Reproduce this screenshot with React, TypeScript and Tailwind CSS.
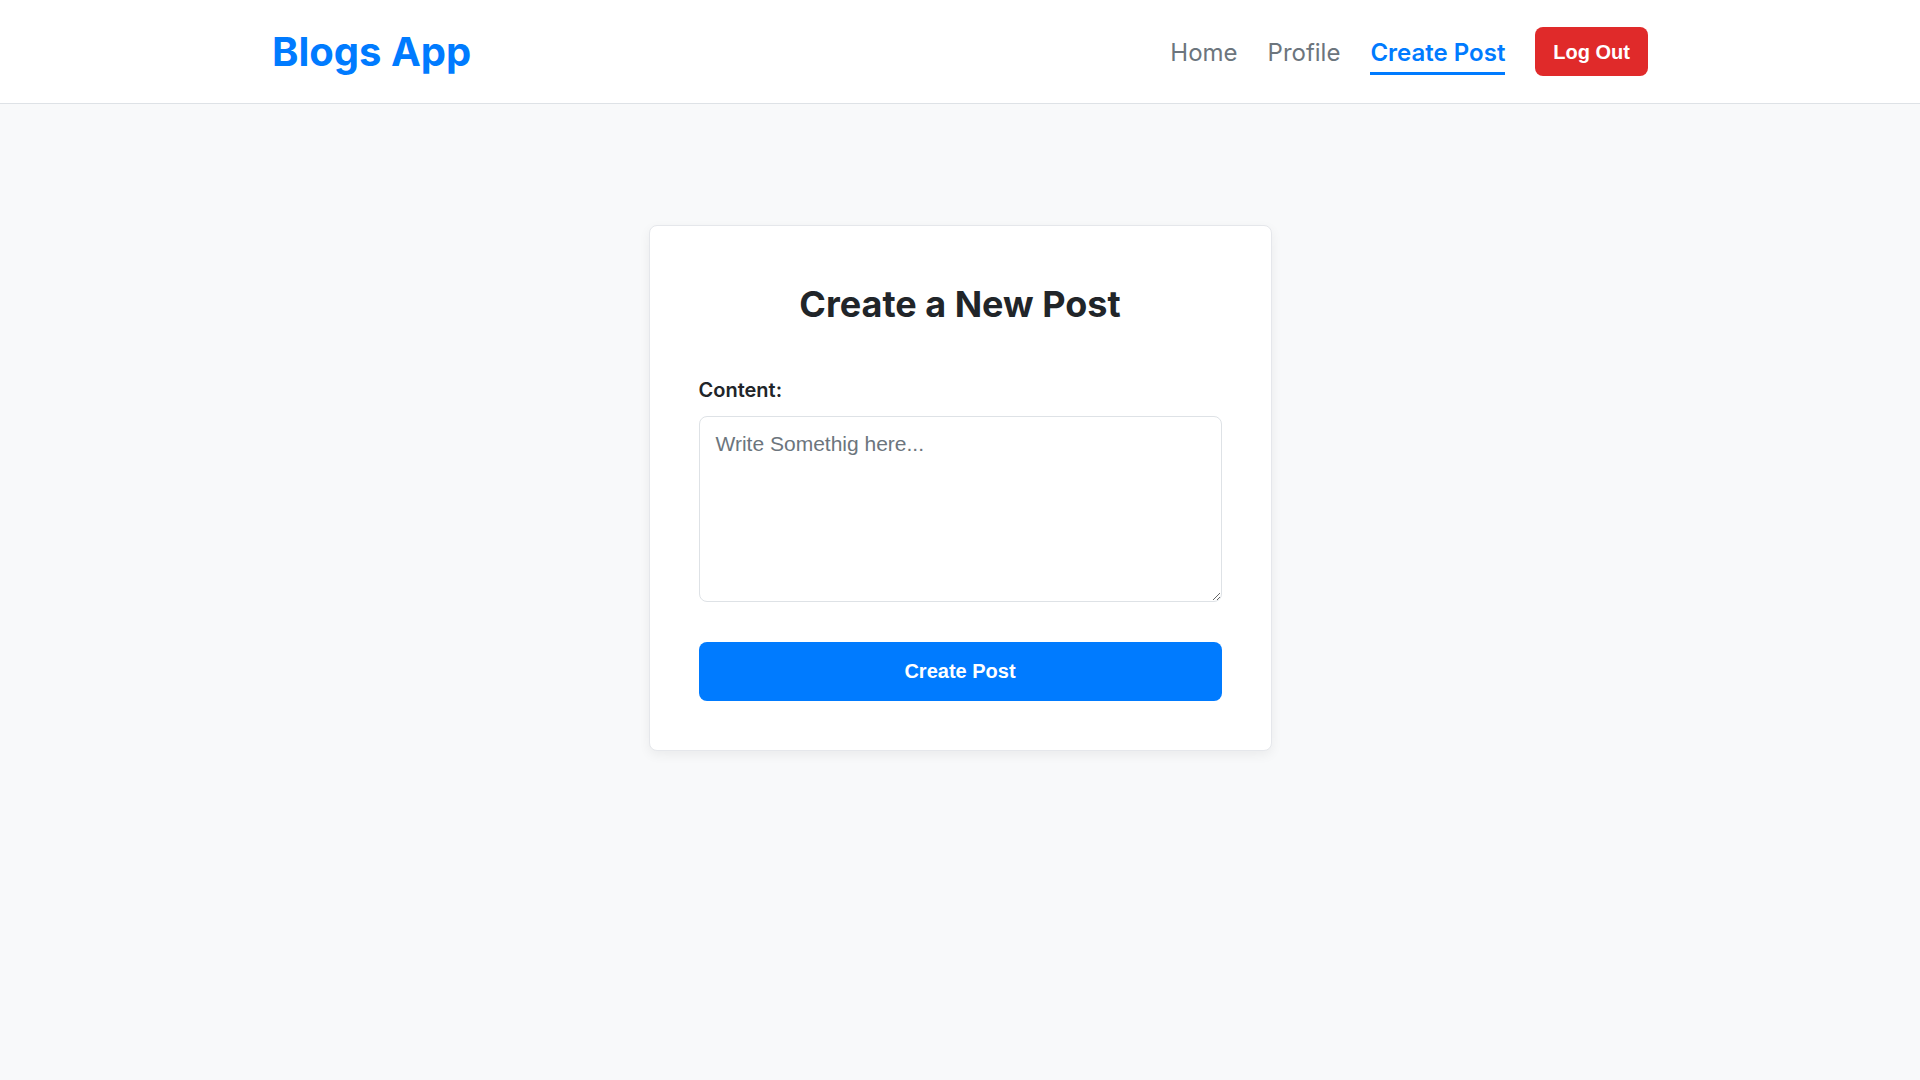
import React, { useState } from "react";

const links = ["Home", "Profile", "Create Post"];

const Navbar: React.FC = () => {
  const active = "Create Post";

  return (
    <header className="bg-white border-b border-[#dee2e6]">
      <div className="max-w-[1376px] mx-auto h-[103px] flex items-center justify-between">
        <a className="text-[40px] font-bold text-[#007bff] leading-none cursor-pointer">
          Blogs App
        </a>
        <nav className="flex items-center gap-[30px]">
          {links.map((link) =>
            link === active ? (
              <a
                key={link}
                className="mt-[6px] text-[24px] font-semibold text-[#007bff] leading-[29px] pt-[3px] pb-[5px] border-b-[3px] border-[#007bff] cursor-pointer"
              >
                {link}
              </a>
            ) : (
              <a
                key={link}
                className="mt-[6px] text-[24px] text-[#6c757d] leading-[29px] pt-[3px] pb-[5px] border-b-[3px] border-transparent cursor-pointer"
              >
                {link}
              </a>
            )
          )}
          <button className="h-[49px] px-[18px] rounded-lg bg-[#e02a2a] text-white text-[20px] font-bold font-['Liberation_Sans',Arial,sans-serif]">
            Log Out
          </button>
        </nav>
      </div>
    </header>
  );
};

const CreatePost: React.FC = () => {
  const [content, setContent] = useState("");

  return (
    <div className="w-[623px] mx-auto mt-[121px] bg-white border border-[#e5e7eb] rounded-lg shadow-[0_4px_12px_rgba(0,0,0,0.06)] px-[49px] pt-[56px] pb-[49px]">
      <h2 className="text-[36px] leading-[44px] font-bold text-[#212529] text-center mb-[52px]">
        Create a New Post
      </h2>
      <label className="block text-[20px] leading-[24px] font-semibold text-[#212529] mb-[14px]">
        Content:
      </label>
      <textarea
        value={content}
        onChange={(e) => setContent(e.target.value)}
        placeholder="Write Somethig here..."
        className="block w-full h-[186px] border border-[#dee2e6] rounded-lg px-[16px] pt-[11px] pb-[12px] text-[21px] text-[#212529] placeholder:text-[#6c757d] font-['Liberation_Sans',Arial,sans-serif] outline-none"
      />
      <button className="block w-full h-[59px] mt-[40px] pb-[2px] rounded-lg bg-[#007bff] text-white text-[20px] font-bold font-['Liberation_Sans',Arial,sans-serif]">
        Create Post
      </button>
    </div>
  );
};

export default function App() {
  return (
    <div className="min-h-screen bg-[#f8f9fa] font-['Inter',sans-serif]">
      <Navbar />
      <CreatePost />
    </div>
  );
}
